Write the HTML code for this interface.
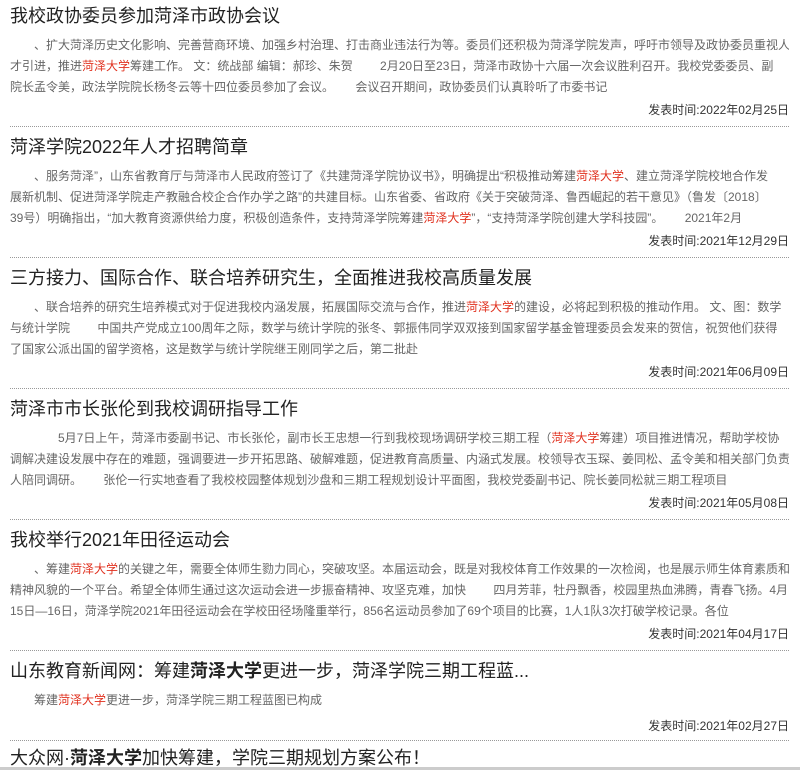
<!DOCTYPE html>
<html><head><meta charset="utf-8">
<style>
html,body{margin:0;padding:0;background:#fff;width:800px;height:770px;overflow:hidden;position:relative}
body{font-family:"Liberation Sans","Microsoft YaHei","Noto Sans CJK SC",sans-serif;}
.blk{position:relative;height:131px;margin:0 11px 0 10px}
.t{height:32px;line-height:32px;font-size:18px;color:#222;white-space:nowrap;overflow:hidden}
.b{margin-top:3px;height:63px;font-size:12px;line-height:21px;color:#666;white-space:nowrap;overflow:hidden}
.d{height:24px;line-height:24px;font-size:12px;color:#333;text-align:right}
.ln{position:absolute;left:0;right:0;top:126px;border-top:1px dotted #999}
.r{color:#e0301e}
.bar{position:absolute;left:0;right:0;bottom:0;height:3px;background:#ccc}
</style></head><body>
<div class="blk"><div class="t">我校政协委员参加菏泽市政协会议</div>
<div class="b">　　、扩大菏泽历史文化影响、完善营商环境、加强乡村治理、打击商业违法行为等。委员们还积极为菏泽学院发声，呼吁市领导及政协委员重视人<br>才引进，推进<span class="r">菏泽大学</span>筹建工作。 文：统战部  编辑：郝珍、朱贺　　 2月20日至23日，菏泽市政协十六届一次会议胜利召开。我校党委委员、副<br>院长孟令美，政法学院院长杨冬云等十四位委员参加了会议。　　 会议召开期间，政协委员们认真聆听了市委书记</div>
<div class="d">发表时间:2022年02月25日</div><div class="ln"></div></div>

<div class="blk"><div class="t">菏泽学院2022年人才招聘简章</div>
<div class="b">　　、服务菏泽”，山东省教育厅与菏泽市人民政府签订了《共建菏泽学院协议书》，明确提出“积极推动筹建<span class="r">菏泽大学</span>、建立菏泽学院校地合作发<br>展新机制、促进菏泽学院走产教融合校企合作办学之路”的共建目标。山东省委、省政府《关于突破菏泽、鲁西崛起的若干意见》（鲁发〔2018〕<br>39号）明确指出，“加大教育资源供给力度，积极创造条件，支持菏泽学院筹建<span class="r">菏泽大学</span>”，“支持菏泽学院创建大学科技园”。　　 2021年2月</div>
<div class="d">发表时间:2021年12月29日</div><div class="ln"></div></div>

<div class="blk"><div class="t">三方接力、国际合作、联合培养研究生，全面推进我校高质量发展</div>
<div class="b">　　、联合培养的研究生培养模式对于促进我校内涵发展，拓展国际交流与合作，推进<span class="r">菏泽大学</span>的建设，必将起到积极的推动作用。 文、图：数学<br>与统计学院　　 中国共产党成立100周年之际，数学与统计学院的张冬、郭振伟同学双双接到国家留学基金管理委员会发来的贺信，祝贺他们获得<br>了国家公派出国的留学资格，这是数学与统计学院继王刚同学之后，第二批赴</div>
<div class="d">发表时间:2021年06月09日</div><div class="ln"></div></div>

<div class="blk"><div class="t">菏泽市市长张伦到我校调研指导工作</div>
<div class="b">　　　　5月7日上午，菏泽市委副书记、市长张伦，副市长王忠想一行到我校现场调研学校三期工程（<span class="r">菏泽大学</span>筹建）项目推进情况，帮助学校协<br>调解决建设发展中存在的难题，强调要进一步开拓思路、破解难题，促进教育高质量、内涵式发展。校领导衣玉琛、姜同松、孟令美和相关部门负责<br>人陪同调研。　　 张伦一行实地查看了我校校园整体规划沙盘和三期工程规划设计平面图，我校党委副书记、院长姜同松就三期工程项目</div>
<div class="d">发表时间:2021年05月08日</div><div class="ln"></div></div>

<div class="blk"><div class="t">我校举行2021年田径运动会</div>
<div class="b">　　、筹建<span class="r">菏泽大学</span>的关键之年，需要全体师生勠力同心，突破攻坚。本届运动会，既是对我校体育工作效果的一次检阅，也是展示师生体育素质和<br>精神风貌的一个平台。希望全体师生通过这次运动会进一步振奋精神、攻坚克难，加快　　 四月芳菲，牡丹飘香，校园里热血沸腾，青春飞扬。4月<br>15日—16日，菏泽学院2021年田径运动会在学校田径场隆重举行，856名运动员参加了69个项目的比赛，1人1队3次打破学校记录。各位</div>
<div class="d">发表时间:2021年04月17日</div><div class="ln"></div></div>

<div class="blk" style="height:87px"><div class="t">山东教育新闻网：筹建<b>菏泽大学</b>更进一步，菏泽学院三期工程蓝...</div>
<div class="b" style="height:21px">　　筹建<span class="r">菏泽大学</span>更进一步，菏泽学院三期工程蓝图已构成</div>
<div class="d" style="margin-top:3px">发表时间:2021年02月27日</div><div class="ln" style="top:85px"></div></div>

<div class="blk" style="height:25px;overflow:hidden"><div class="t">大众网·<b>菏泽大学</b>加快筹建，学院三期规划方案公布！</div></div>
<div class="bar"></div>
</body></html>
